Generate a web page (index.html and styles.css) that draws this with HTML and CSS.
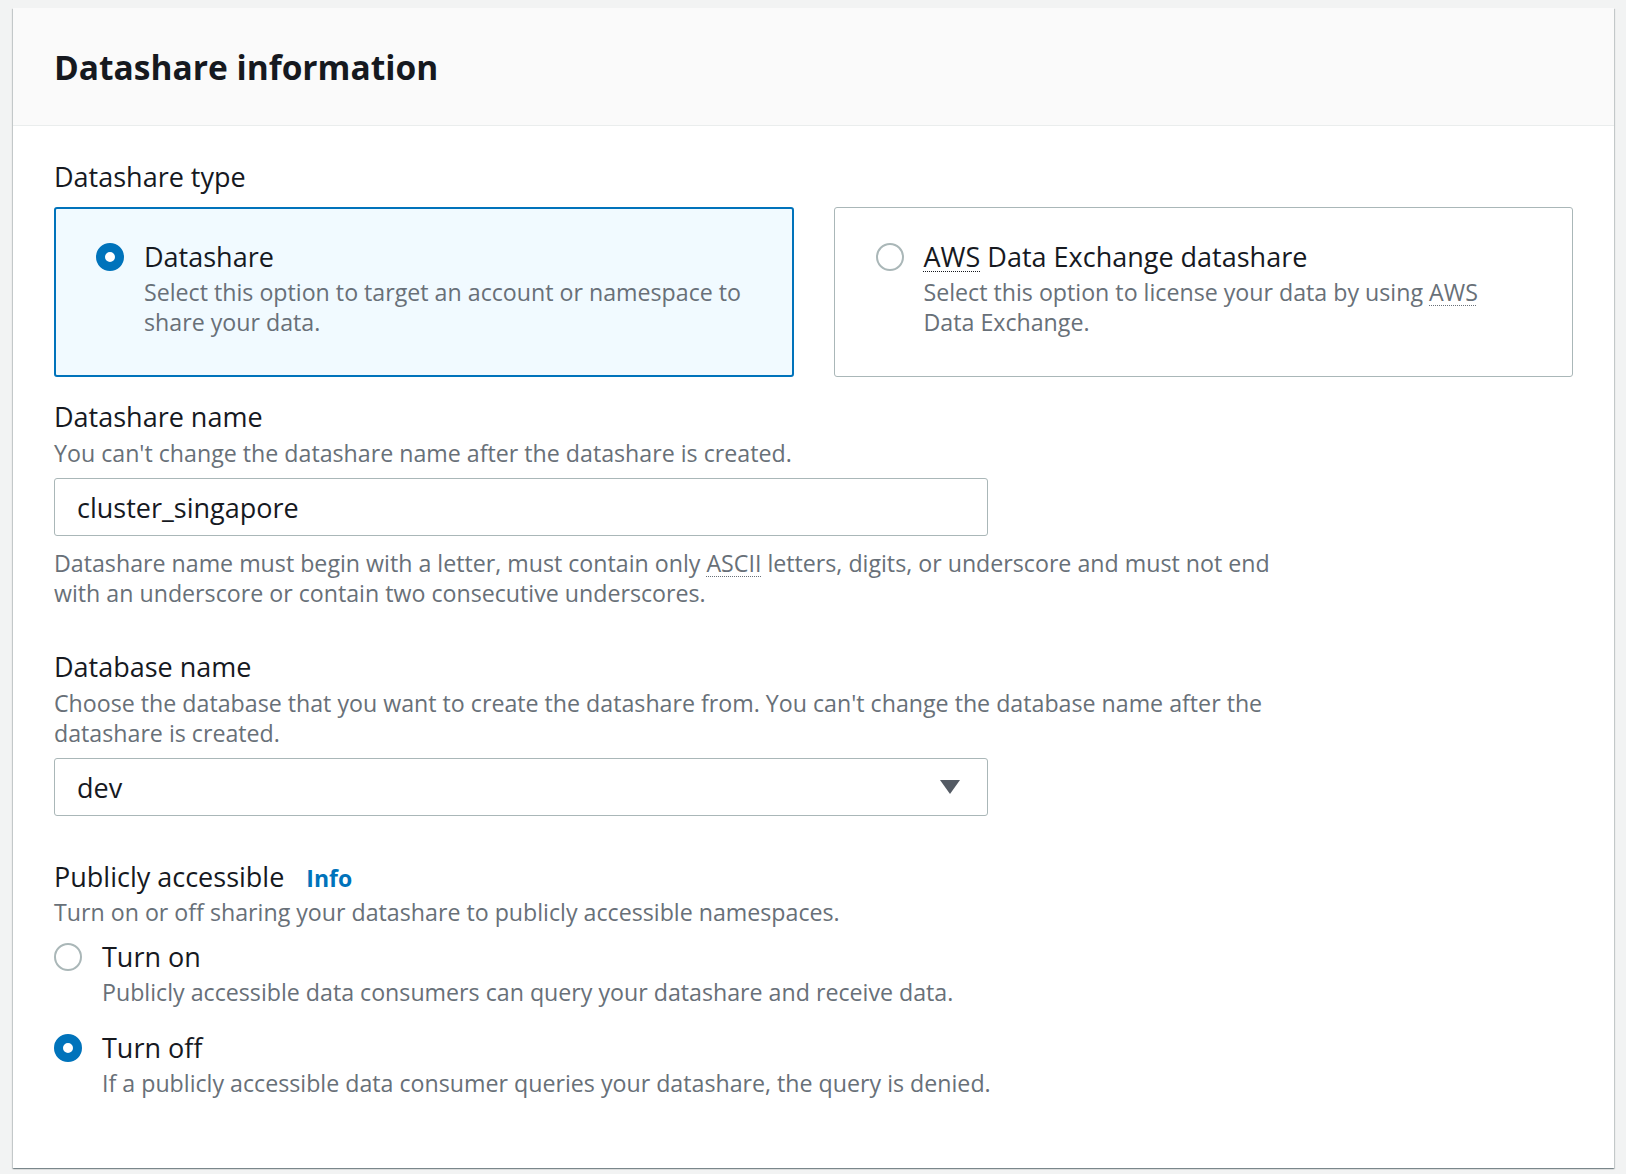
FILE: index.html
```html
<!DOCTYPE html>
<html lang="en">
<head>
<meta charset="utf-8">
<title>Datashare information</title>
<link rel="stylesheet" href="styles.css">
</head>
<body>
<div class="page">
  <section class="card">
    <header class="card-header">
      <h2 class="card-title">Datashare information</h2>
    </header>
    <div class="card-body">
      <div class="field">
        <div class="label">Datashare type</div>
        <div class="tiles">
          <div class="tile tile-selected">
            <span class="radio radio-on"></span>
            <div class="tile-text">
              <div class="option-label">Datashare</div>
              <div class="desc">Select this option to target an account or namespace to share your data.</div>
            </div>
          </div>
          <div class="tile">
            <span class="radio"></span>
            <div class="tile-text">
              <div class="option-label"><abbr class="abbr">AWS</abbr> Data Exchange datashare</div>
              <div class="desc">Select this option to license your data by using <abbr class="abbr">AWS</abbr> Data Exchange.</div>
            </div>
          </div>
        </div>
      </div>

      <div class="field field-name">
        <div class="label">Datashare name</div>
        <div class="desc">You can't change the datashare name after the datashare is created.</div>
        <div class="input">cluster_singapore</div>
        <div class="desc constraint">Datashare name must begin with a letter, must contain only <abbr class="abbr">ASCII</abbr> letters, digits, or underscore and must not end with an underscore or contain two consecutive underscores.</div>
      </div>

      <div class="field field-db">
        <div class="label">Database name</div>
        <div class="desc">Choose the database that you want to create the datashare from. You can't change the database name after the datashare is created.</div>
        <div class="input select">
          <span>dev</span>
          <svg class="caret" width="20" height="14" viewBox="0 0 20 14"><path d="M0 0 H20 L10 14 Z" fill="#545b64"/></svg>
        </div>
      </div>

      <div class="field field-public">
        <div class="label-row">
          <span class="label">Publicly accessible</span>
          <a class="info">Info</a>
        </div>
        <div class="desc">Turn on or off sharing your datashare to publicly accessible namespaces.</div>
        <div class="radio-group">
          <div class="radio-item">
            <span class="radio"></span>
            <div>
              <div class="option-label">Turn on</div>
              <div class="desc">Publicly accessible data consumers can query your datashare and receive data.</div>
            </div>
          </div>
          <div class="radio-item item-off">
            <span class="radio radio-on"></span>
            <div>
              <div class="option-label">Turn off</div>
              <div class="desc">If a publicly accessible data consumer queries your datashare, the query is denied.</div>
            </div>
          </div>
        </div>
      </div>
    </div>
  </section>
</div>
</body>
</html>
```

FILE: styles.css
```css
* { box-sizing: border-box; }

html, body {
  margin: 0;
  padding: 0;
  background: #f2f3f3;
}

body {
  font-family: "Open Sans", "Liberation Sans", Arial, sans-serif;
  color: #16191f;
}

.page {
  padding: 8px 12px 6px 13px;
}

.card {
  background: #ffffff;
  box-shadow: 0 1px 1px 0 rgba(0, 28, 36, 0.3), 1px 1px 1px 0 rgba(0, 28, 36, 0.15), -1px 1px 1px 0 rgba(0, 28, 36, 0.15);
}

.card-header {
  background: #fafafa;
  height: 118px;
  border-bottom: 1px solid #eaeded;
  padding: 38px 41px 0;
}

.card-title {
  margin: 0;
  font-size: 33.5px;
  line-height: 42px;
  font-weight: 700;
}

.card-body {
  padding: 33px 41px 70px;
}

.label {
  font-size: 27px;
  line-height: 36px;
}

.desc {
  font-size: 23.2px;
  line-height: 30px;
  color: #687078;
  max-width: 1255px;
}

.abbr {
  text-decoration: underline dotted currentColor;
  text-decoration-thickness: 1px;
  text-underline-offset: 4px;
}

.tiles {
  display: grid;
  grid-template-columns: 1fr 1fr;
  gap: 40px;
  margin-top: 12px;
}

.tile {
  display: flex;
  gap: 20px;
  border: 1px solid #aab7b8;
  border-radius: 3px;
  padding: 31px 41px 39px 41px;
  min-height: 170px;
}

.tile-selected {
  border: 2px solid #0073bb;
  background: #f1faff;
  padding: 30px 40px 38px 40px;
}

.option-label {
  font-size: 27px;
  line-height: 36px;
}

.option-label + .desc {
  margin-top: 2px;
}

.radio {
  flex: none;
  width: 28px;
  height: 28px;
  border-radius: 50%;
  border: 2px solid #aab7b8;
  background: #ffffff;
  margin-top: 4px;
}

.radio-on {
  border: 9px solid #0073bb;
}

.field-name {
  margin-top: 22px;
}

.label + .desc {
  margin-top: 3px;
}

.input {
  margin-top: 10px;
  width: 934px;
  height: 58px;
  border: 1px solid #aab7b8;
  border-radius: 3px;
  background: #ffffff;
  padding: 0 22px;
  font-size: 27px;
  display: flex;
  align-items: center;
}

.constraint {
  margin-top: 12px;
}

.field-db {
  margin-top: 41px;
}

.select {
  justify-content: space-between;
  padding-right: 27px;
}

.caret {
  display: block;
}

.field-public {
  margin-top: 43px;
}

.label-row {
  display: flex;
  align-items: baseline;
  gap: 22px;
}

.info {
  color: #0073bb;
  font-weight: 700;
  font-size: 23px;
  cursor: pointer;
}

.label-row + .desc {
  margin-top: 2px;
}

.radio-group {
  margin-top: 12px;
}

.radio-item {
  display: flex;
  gap: 20px;
}

.radio-item .option-label + .desc {
  margin-top: 2px;
}

.item-off {
  margin-top: 23px;
}
```
